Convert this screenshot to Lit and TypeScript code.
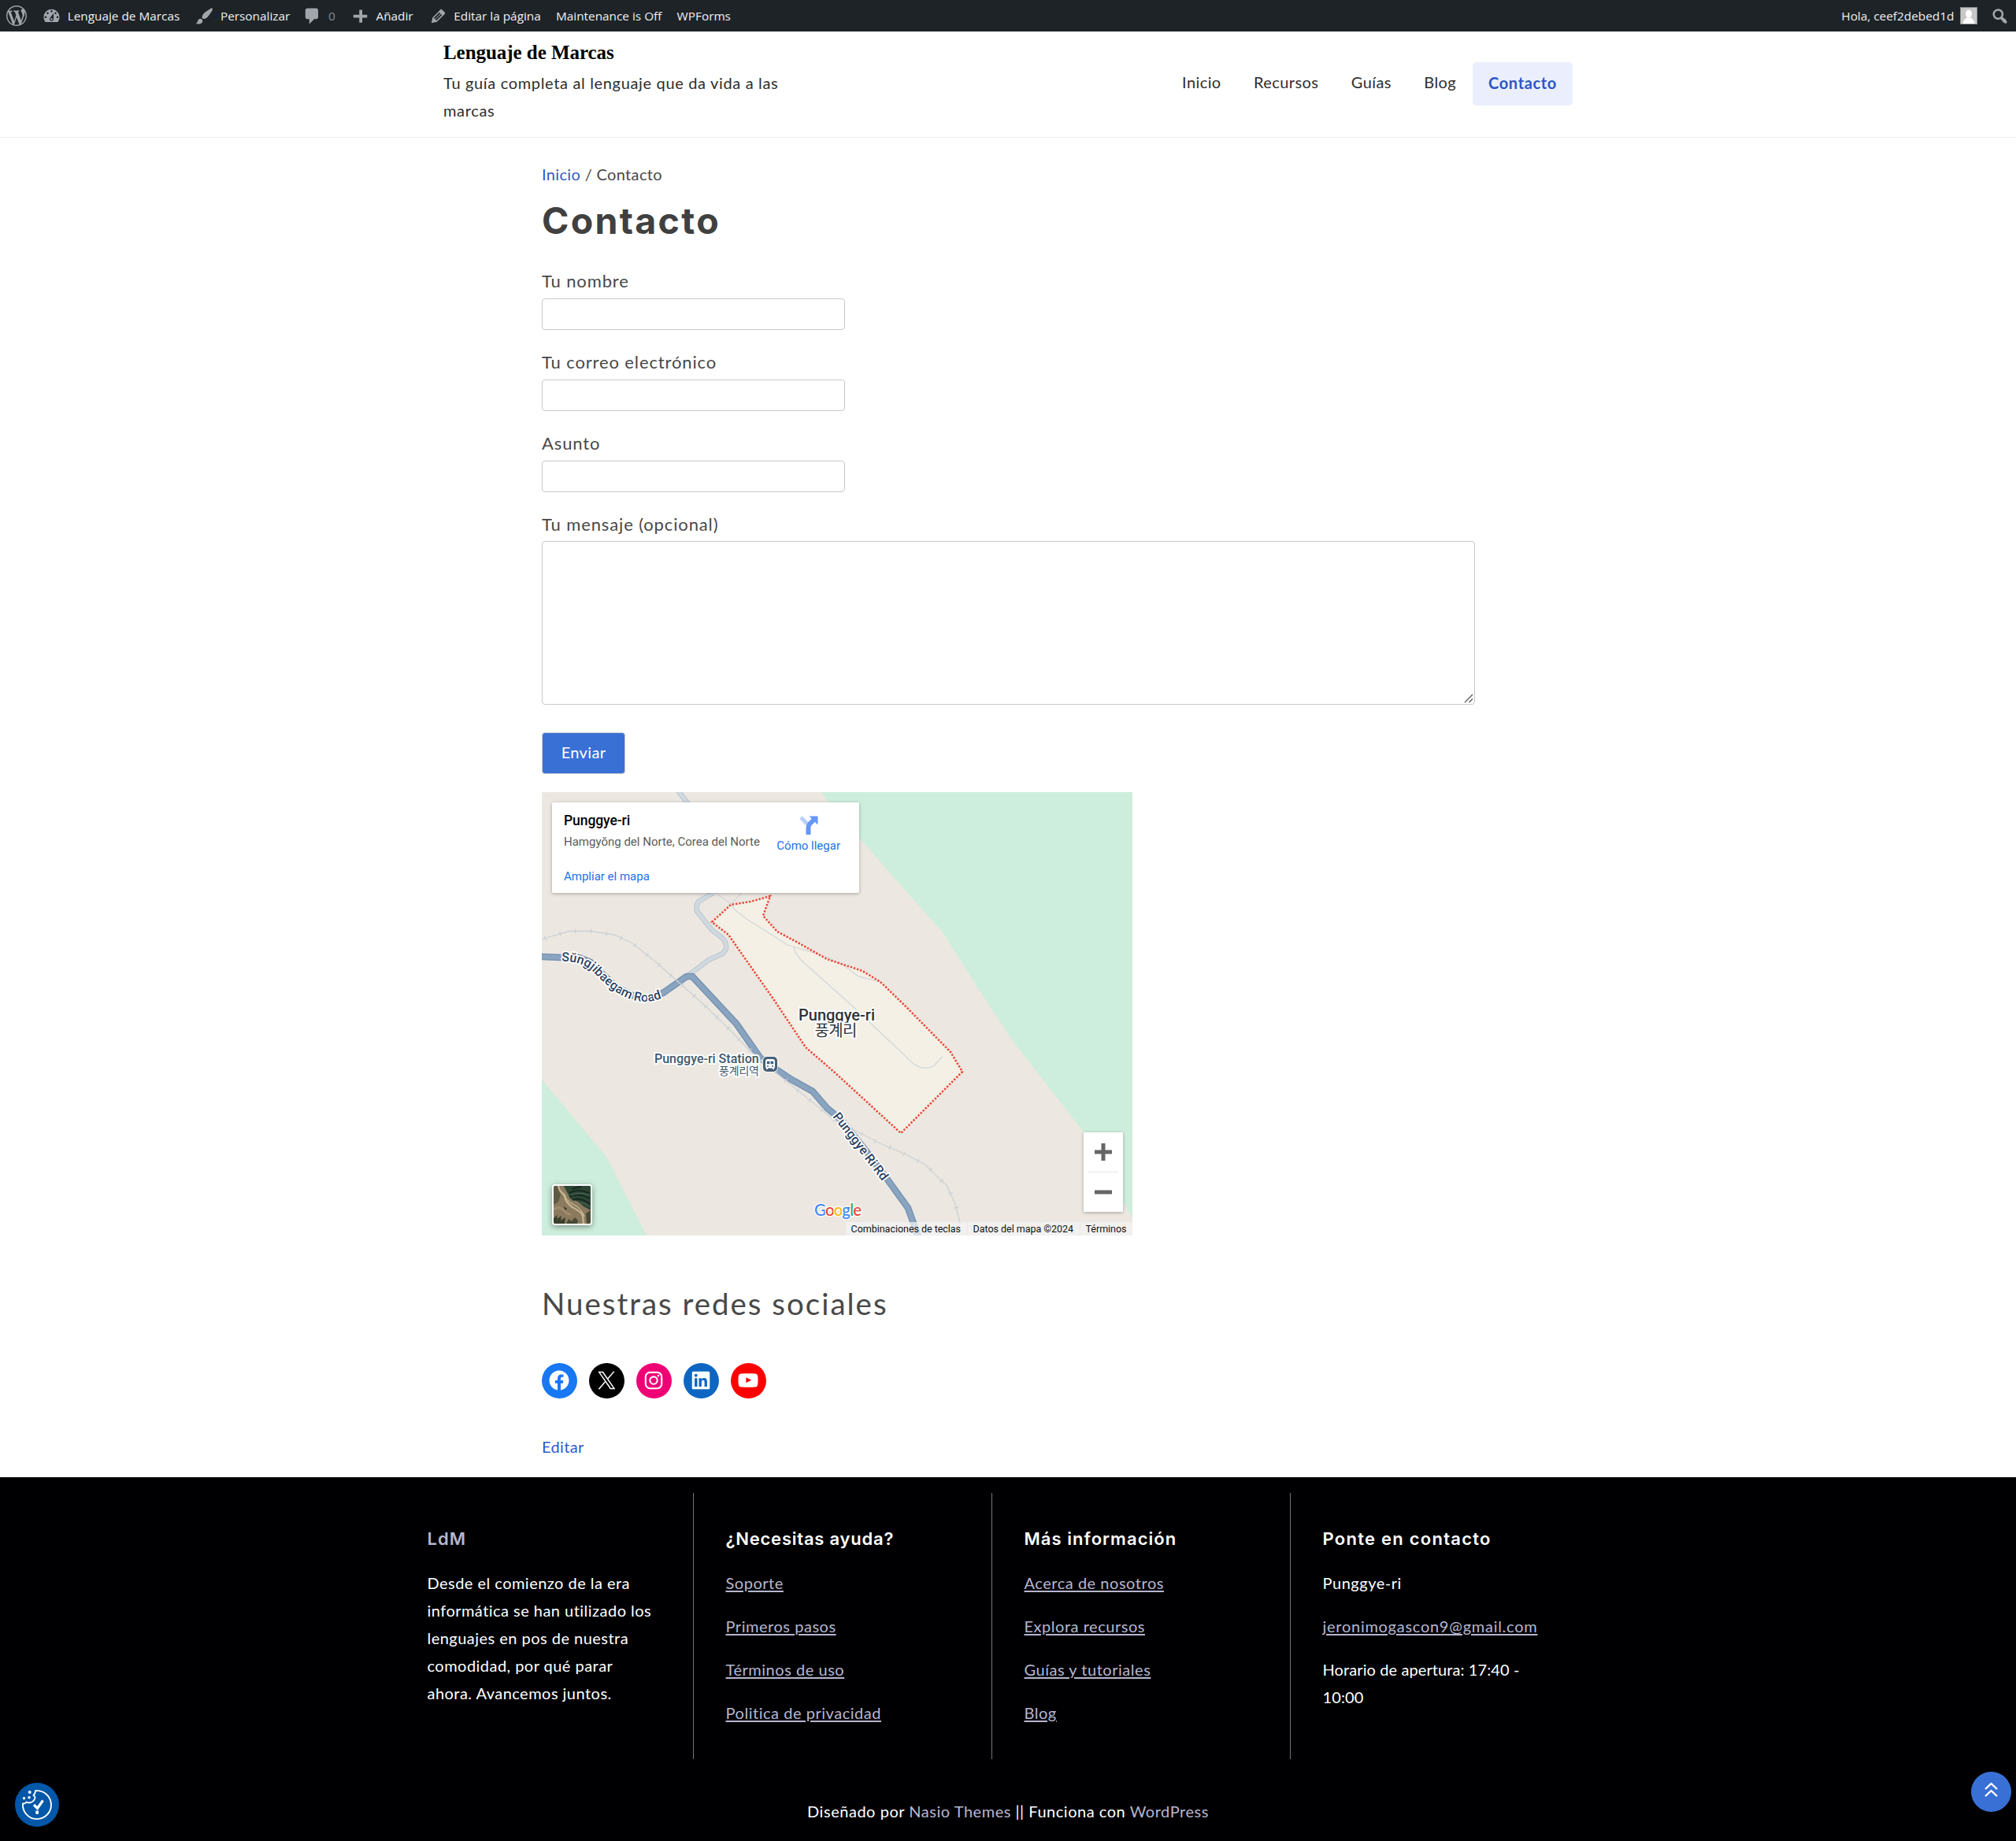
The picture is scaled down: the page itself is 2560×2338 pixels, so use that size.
import { LitElement, html, svg, css } from "lit";
import { customElement } from "lit/decorators.js";

const DASH = {
  wordpress:
    "M20 10c0-5.51-4.49-10-10-10C4.48 0 0 4.49 0 10c0 5.52 4.48 10 10 10 5.51 0 10-4.48 10-10zM7.78 15.37L4.37 6.22c.55-.02 1.17-.08 1.17-.08.5-.06.44-1.13-.06-1.11 0 0-1.45.11-2.37.11-.18 0-.37 0-.58-.01C4.12 2.69 6.87 1.11 10 1.11c2.33 0 4.45.87 6.05 2.34-.68-.11-1.65.39-1.65 1.58 0 .74.45 1.36.9 2.1.35.61.55 1.36.55 2.46 0 1.49-1.4 5-1.4 5l-3.03-8.37c.54-.02.82-.17.82-.17.5-.05.44-1.25-.06-1.22 0 0-1.44.12-2.38.12-.87 0-2.33-.12-2.33-.12-.5-.03-.56 1.2-.06 1.22l.92.08 1.26 3.41zM17.41 10c.24-.64.74-1.87.43-4.25.7 1.29 1.05 2.71 1.05 4.25 0 3.29-1.73 6.24-4.4 7.78.97-2.59 1.94-5.2 2.92-7.78zM6.1 18.09C3.12 16.65 1.11 13.53 1.11 10c0-1.3.23-2.48.72-3.59C3.25 10.3 4.67 14.2 6.1 18.09zm4.03-6.63l2.58 6.98c-.86.29-1.76.45-2.71.45-.79 0-1.57-.11-2.29-.33.81-2.38 1.62-4.74 2.42-7.1z",
  dashboard:
    "M3.76 16h12.48c1.1-1.37 1.76-3.11 1.76-5 0-4.42-3.58-8-8-8s-8 3.58-8 8c0 1.89.66 3.63 1.76 5zM10 4c.55 0 1 .45 1 1s-.45 1-1 1-1-.45-1-1 .45-1 1-1zM6 6c.55 0 1 .45 1 1s-.45 1-1 1-1-.45-1-1 .45-1 1-1zm8 0c.55 0 1 .45 1 1s-.45 1-1 1-1-.45-1-1 .45-1 1-1zm-5.37 5.55L12 7v6c0 1.1-.9 2-2 2s-2-.9-2-2c0-.57.24-1.08.63-1.45zM4 10c.55 0 1 .45 1 1s-.45 1-1 1-1-.45-1-1 .45-1 1-1zm12 0c.55 0 1 .45 1 1s-.45 1-1 1-1-.45-1-1 .45-1 1-1zm-5 3c0-.55-.45-1-1-1s-1 .45-1 1 .45 1 1 1 1-.45 1-1z",
  brush:
    "M18.33 3.57s.27-.8-.31-1.36c-.53-.52-1.22-.24-1.22-.24-.61.3-5.76 3.47-7.67 5.57-.86.96-2.06 3.79-1.09 4.82.92.98 3.96-.17 4.79-1 2.06-2.06 5.21-7.17 5.5-7.79zM1.4 17.65c2.37-1.56 1.46-3.41 3.23-4.64.93-.65 2.22-.62 3.08.29.63.67.8 2.57-.16 3.46-1.57 1.45-4 1.55-6.15.89z",
  comment: "M5 2h9c1.1 0 2 .9 2 2v7c0 1.1-.9 2-2 2h-2l-5 5v-5H5c-1.1 0-2-.9-2-2V4c0-1.1.9-2 2-2z",
  plus: "M17 8.5v3h-5v5H9v-5H3v-3h6v-5h3v5h5z",
  edit: "M13.89 3.39l2.71 2.72c.46.46.42 1.24.03 1.64l-8.01 8.02-5.56 1.16 1.16-5.58s7.6-7.63 7.99-8.03c.39-.39 1.22-.39 1.68.07zm-2.73 2.79l-5.59 5.61 1.11 1.11 5.54-5.65zm-2.97 8.23l5.58-5.6-1.07-1.08-5.59 5.6z",
  search:
    "M12.14 4.18c1.87 1.87 2.11 4.75.72 6.89.12.1.22.21.36.31.2.16.47.36.81.59.34.24.56.39.66.47.42.31.73.57.94.78.32.32.6.65.84 1 .25.35.44.69.59 1.04.14.35.21.68.18 1-.02.32-.14.59-.36.81s-.49.34-.81.36c-.31.02-.65-.04-.99-.19-.35-.14-.7-.34-1.04-.59-.35-.24-.68-.52-1-.84-.21-.21-.47-.52-.77-.93-.1-.13-.25-.35-.47-.66-.22-.32-.4-.57-.56-.78-.16-.2-.29-.35-.44-.5-2.07 1.09-4.69.76-6.44-.98-2.14-2.15-2.14-5.64 0-7.78 2.15-2.15 5.63-2.15 7.78 0zm-1.41 6.36c1.36-1.37 1.36-3.58 0-4.95-1.37-1.37-3.59-1.37-4.95 0-1.37 1.37-1.37 3.58 0 4.95 1.36 1.37 3.58 1.37 4.95 0z",
};

const dash = (d: string) => html`<svg class="ico" viewBox="0 0 20 20"><path fill-rule="evenodd" d=${d}></path></svg>`;

@customElement("admin-bar")
export class AdminBar extends LitElement {
  static styles = css`
    :host { display: block; }
    .bar { display: flex; align-items: center; height: 40px; padding: 0 8px 0 8px; gap: 19.2px; box-sizing: border-box; background: #1d2327; color: #f0f0f1; font: 15.35px/43px "Open Sans", sans-serif; white-space: nowrap; }
    .item { display: flex; align-items: center; gap: 7.5px; height: 40px; }
    .ico { width: 25px; height: 25px; fill: #a0a6ab; display: block; }
    .logo .ico { width: 26px; height: 26px; }
    .custom { margin-right: -3px; }
    .muted { color: #858a8e; }
    .right { margin-left: auto; }
    .avatar { width: 20px; height: 20px; border: 1px solid #8c8f94; background: #c8c8c8; display: block; }
    .find .ico { width: 25px; height: 25px; }
    .find { margin-left: -3px; }
  `;
  render() {
    return html`<div class="bar">
      <span class="item logo">${dash(DASH.wordpress)}</span>
      <span class="item">${dash(DASH.dashboard)}<span>Lenguaje de Marcas</span></span>
      <span class="item custom">${dash(DASH.brush)}<span>Personalizar</span></span>
      <span class="item">${dash(DASH.comment)}<span class="muted">0</span></span>
      <span class="item">${dash(DASH.plus)}<span>Añadir</span></span>
      <span class="item">${dash(DASH.edit)}<span>Editar la página</span></span>
      <span class="item">Maintenance is Off</span>
      <span class="item">WPForms</span>
      <span class="item right"><span>Hola, ceef2debed1d</span>
        <svg class="avatar" viewBox="0 0 20 20"><ellipse cx="10" cy="7.6" rx="4" ry="5" fill="#fff"></ellipse><path d="M2.5 20c.5-4.500 3-6 5-7.500h5c2 1.500 4.500 3 5 7.500z" fill="#fff"></path></svg></span>
      <span class="item find">${dash(DASH.search)}</span>
    </div>`;
  }
}

@customElement("site-header")
export class SiteHeader extends LitElement {
  static styles = css`
    :host { display: block; }
    .head { height: 135px; box-sizing: border-box; border-bottom: 1px solid #efefef; background: #fff; }
    .inner { width: 1434px; margin: 0 auto; display: flex; justify-content: space-between; font: 20px/35px Lato, sans-serif; color: #2e2e2e; }
    .brand { width: 450px; padding-top: 8px; }
    .title { font: bold 25px/38px "Liberation Serif", serif; letter-spacing: -0.05px; color: #000; margin-bottom: 2px; }
    .tag { letter-spacing: 0.66px; }
    nav { display: flex; align-items: flex-start; padding-top: 39px; letter-spacing: 0.4px; }
    a { padding: 8px 21px 13px 20.5px; line-height: 34px; }
    .active { padding: 9px 20px 12px; background: #ebeefd; color: #2a56c6; font-weight: 700; border-radius: 5px; letter-spacing: 0.65px; }
  `;
  render() {
    return html`<div class="head"><div class="inner">
      <div class="brand"><div class="title">Lenguaje de Marcas</div><div class="tag">Tu guía completa al lenguaje que da vida a las marcas</div></div>
      <nav><a>Inicio</a><a>Recursos</a><a>Guías</a><a>Blog</a><a class="active">Contacto</a></nav>
    </div></div>`;
  }
}

const RAIL =
  "M688 1193L700 1189L723 1182.500H750L780 1187L803 1198L833 1222L867 1252L893 1275L922 1303L950 1332L970 1350L995 1370L1042 1408L1057 1421L1100 1443L1113 1450L1150 1466L1175 1479L1198 1502L1202 1505L1213 1529L1218 1549V1569";
const ROAD =
  "M688 1215L713 1216L735 1216L750 1222L762 1234L782 1253L803 1264L823 1268L842 1261L872 1240L879 1240L907 1270L935 1300L965 1343L978 1353L1005 1371L1032 1386L1050 1407L1068 1422L1100 1462L1127 1498L1153 1534L1166 1570";
const LANE =
  "M906 1134L888 1144Q883 1149 885 1157L903 1180L918 1192Q923 1198 922 1205L918 1211L900 1219L875 1238";
const ZONE =
  "M904 1171L928 1149L953 1145L978 1138L969 1163L987 1183L1013 1197L1050 1218L1095 1233L1118 1247L1150 1278L1207 1336L1222 1361L1144 1439L1060 1362L1023 1330L983 1270L925 1187Z";

@customElement("place-map")
export class PlaceMap extends LitElement {
  static styles = css`
    :host { display: block; letter-spacing: 0; }
    .map { position: relative; width: 750px; height: 563px; overflow: hidden; font-family: Roboto, sans-serif; }
    .canvas { display: block; width: 750px; height: 563px; }
    .label { font: 500 20px Roboto, sans-serif; fill: #2f3337; stroke: #fff; stroke-width: 4px; paint-order: stroke; stroke-linejoin: round; }
    .ko { font-family: "Noto Sans CJK KR", sans-serif; font-weight: 400; }
    .small { font-size: 16px; fill: #3f586c; }
    .small.ko { font-size: 14px; }
    .road { font-size: 16px; fill: #2a3f5f; stroke-width: 3.5px; }
    .google { font: 500 20.5px Lato, sans-serif; stroke: #fff; stroke-width: 3px; stroke-opacity: 0.8; paint-order: stroke; }
    .card { position: absolute; left: 13px; top: 13px; width: 390px; height: 115px; box-sizing: border-box; background: #fff; border-radius: 2px; box-shadow: 0 1px 4px rgba(0, 0, 0, 0.3); display: flex; padding: 0 24px 0 15px; justify-content: space-between; font-size: 15px; line-height: 20px; white-space: nowrap; }
    .info { padding-top: 11px; }
    .name { font-weight: 500; font-size: 17.5px; line-height: 24px; letter-spacing: -0.08px; color: #000; }
    .addr { color: #5b5b5b; margin-top: 5px; }
    .more { margin-top: 24px; }
    .link { color: #1a73e8; }
    .dir { padding-top: 17px; display: flex; flex-direction: column; align-items: center; gap: 4px; }
    .dir svg { width: 24px; height: 24px; }
    .thumb { position: absolute; left: 13px; top: 498px; width: 51px; height: 52px; box-sizing: border-box; border: 2px solid #fff; border-radius: 4px; box-shadow: 0 2px 7px rgba(0, 0, 0, 0.4); overflow: hidden; }
    .thumb svg { display: block; width: 47px; height: 48px; }
    .zoom { position: absolute; left: 688px; top: 432px; width: 50px; height: 101px; background: #fff; box-shadow: 0 1px 4px rgba(0, 0, 0, 0.3); }
    .attr { position: absolute; right: 0; bottom: 0; display: flex; height: 17px; font-size: 12.5px; line-height: 17px; color: #111; letter-spacing: -0.03px; }
    .attr span { padding: 0 7.5px 0 7px; background: rgba(245, 245, 245, 0.72); margin-left: 1px; }
  `;
  render() {
    return html`<div class="map">
      <svg class="canvas" viewBox="688 1006 750 563">
        <rect x="688" y="1006" width="750" height="563" fill="#ece7e0"></rect>
        <path d="M1042 1006L1092 1065L1140 1120L1197 1184L1240 1252L1287 1323L1377 1439L1438 1547V1006Z" fill="#cdeedc"></path>
        <path d="M688 1371L770 1469L821 1569H688Z" fill="#cdeedc"></path>
        <path d=${ZONE} fill="#f4f0e5"></path>
        <g fill="none" stroke="#d3d7da" stroke-width="1.300">
          <path d="M908 1133L928 1148L933 1155L945 1165L1000 1200L1047 1214L1070 1225L1090 1240L1118 1247M942 1134L928 1148"></path>
          <path d="M1008 1203L1010 1210L1018 1220L1085 1280L1160 1351Q1173 1360 1185 1354L1197 1342"></path>
        </g>
        <path d=${ZONE} fill="none" stroke="#ea4335" stroke-width="2.500" stroke-dasharray="2.300 2"></path>
        <g fill="none">
          <path d=${LANE} stroke="#b9c6d0" stroke-width="6.500"></path>
          <path d=${LANE} stroke="#d0d9df" stroke-width="4.500"></path>
          <path d="M861 1004L876 1024" stroke="#b9c6d0" stroke-width="6.500"></path>
          <path d="M861 1004L876 1024" stroke="#d0d9df" stroke-width="4.500"></path>
          <path d=${ROAD} stroke="#6f90b3" stroke-width="8.500" stroke-linejoin="round"></path>
          <path d=${ROAD} stroke="#8aa4bf" stroke-width="6" stroke-linejoin="round"></path>
          <path d=${RAIL} stroke="#cdd1d5" stroke-width="1.300"></path>
          <path d=${RAIL} stroke="#cdd1d5" stroke-width="6" stroke-dasharray="1.300 18.500" stroke-dashoffset="-4"></path>
          <path id="w" d="M713 1221Q737 1220 752 1233C768 1249 783 1264 804 1270Q826 1276 848 1264"></path>
          <path id="s" d="M1057 1418L1091 1462L1126 1508"></path>
        </g>
        <text class="label road"><textPath href="#w">Sŭngjibaegam Road</textPath></text>
        <text class="label road"><textPath href="#s">Punggye Ri Rd</textPath></text>
        <text class="label" x="1014" y="1296">Punggye-ri</text>
        <text class="label ko" x="1034.500" y="1316" textLength="54">풍계리</text>
        <text class="label small" x="831" y="1350">Punggye-ri Station</text>
        <text class="label small ko" x="913" y="1364.500" textLength="51">풍계리역</text>
        <g transform="translate(969 1342)">
          <rect x="-1" y="-1" width="20" height="21" rx="6" fill="#fff" opacity=".8"></rect>
          <rect width="18" height="19" rx="5" fill="#455f78"></rect>
          <path d="M6 3h6q3 0 3 3v7q0 1.500-1.500 1.500l1 1.500h-2l-1-1.500h-5l-1 1.500h-2l1-1.500Q3 14.500 3 13V6q0-3 3-3z" fill="#fff"></path>
          <path d="M4.800 5.800h3.600v3.400H4.800zM9.600 5.800h3.600v3.400H9.600z" fill="#455f78"></path>
          <circle cx="6" cy="12" r="1" fill="#455f78"></circle><circle cx="12" cy="12" r="1" fill="#455f78"></circle>
        </g>
        <text class="google" x="1034" y="1543.500" textLength="60"><tspan fill="#4285f4">G</tspan><tspan fill="#ea4335">o</tspan><tspan fill="#fbbc04">o</tspan><tspan fill="#4285f4">g</tspan><tspan fill="#34a853">l</tspan><tspan fill="#ea4335">e</tspan></text>
      </svg>
      <div class="card">
        <div class="info"><div class="name">Punggye-ri</div><div class="addr">Hamgyŏng del Norte, Corea del Norte</div><div class="link more">Ampliar el mapa</div></div>
        <div class="dir link"><svg viewBox="0 0 24 24" fill="none"><path d="M2 2L10 10.500" stroke="#b9cffb" stroke-width="5"></path><path d="M11.500 24V15Q11.500 12 13.500 10L18.500 5" stroke="#6596f8" stroke-width="6"></path><path d="M12.500 0.500H23.500V11.500Z" fill="#6596f8"></path></svg><span>Cómo llegar</span></div>
      </div>
      <div class="thumb"><svg viewBox="0 0 47 48">
        <rect width="47" height="48" fill="#8b7a5e"></rect>
        <path d="M13 0H47V31L38 26L31 20L22 17L18 10Z" fill="#2c4535"></path>
        <path d="M0 0H5L9 12L6 20L0 24Z" fill="#5c5a43"></path>
        <path d="M20 9Q30 3 45 9M20 14Q32 8 46 16M24 18Q34 14 46 23M23 4L35 1" stroke="#16291f" stroke-width="2" fill="none"></path>
        <path d="M22 12Q33 7 45 12M32 22Q38 20 46 27" stroke="#55705a" stroke-width="1" fill="none"></path>
        <path d="M0 41L5 37L4 42L10 38L9 44L15 40L14 48H0ZM13 26L17 29L14 32Z" fill="#39402b"></path>
        <path d="M16 48L19 42L23 45L27 40L31 44L30 48ZM41 35L47 31V48H42Z" fill="#474b35"></path>
        <path d="M0 30Q8 25 13 31T22 36" stroke="#a08d6d" stroke-width="3" fill="none"></path>
        <path d="M6 0Q7 6 11 9T15 17Q19 25 27 29T37 38L38 48" stroke="#c2b08d" stroke-width="2.500" fill="none"></path>
        <path d="M12 10Q17 20 26 24T39 39" stroke="#ddcfae" stroke-width="1" fill="none"></path>
      </svg></div>
      <svg class="zoom" viewBox="0 0 50 101"><path d="M14 22.500h8.500V14h5v8.500H36v5h-8.500V36h-5v-8.500H14zM14 73.500h22v5H14z" fill="#666"></path><path d="M6 50.500h38" stroke="#e6e6e6" stroke-width="1.200"></path></svg>
      <div class="attr"><span>Combinaciones de teclas</span><span>Datos del mapa ©2024</span><span>Términos</span></div>
    </div>`;
  }
}

const SOCIAL = [
  { bg: "fb", art: svg`<path d="M12 2C6.5 2 2 6.5 2 12c0 5 3.7 9.1 8.4 9.9v-7H7.900V12h2.500V9.800c0-2.500 1.500-3.900 3.800-3.900 1.100 0 2.200.2 2.200.2v2.500h-1.300c-1.200 0-1.600.8-1.600 1.600V12h2.800l-.4 2.900h-2.300v7C18.300 21.100 22 17 22 12c0-5.500-4.500-10-10-10z"></path>` },
  { bg: "tx", art: svg`<path d="M13.982 10.622 20.54 3h-1.554l-5.693 6.618L8.745 3H3.500l6.876 10.007L3.500 21h1.554l6.012-6.989L15.868 21h5.245l-7.131-10.378Zm-2.128 2.474-.697-.997-5.543-7.930H8l4.474 6.400.697.996 5.815 8.318h-2.387l-4.745-6.787Z"></path>` },
  { bg: "ig", art: svg`<rect x="3.850" y="3.850" width="16.300" height="16.300" rx="4.600" fill="none" stroke="#fff" stroke-width="1.700"></rect><circle cx="12" cy="12" r="3.750" fill="none" stroke="#fff" stroke-width="1.700"></circle><circle cx="16.800" cy="7.200" r="1.100"></circle>` },
  { bg: "li", art: svg`<path d="M19.7,3H4.3C3.582,3,3,3.582,3,4.3v15.4C3,20.418,3.582,21,4.3,21h15.4c0.718,0,1.3-0.582,1.3-1.3V4.3C21,3.582,20.418,3,19.7,3z M8.339,18.338H5.667v-8.59h2.672V18.338z M7.004,8.574c-0.857,0-1.549-0.694-1.549-1.548c0-0.855,0.691-1.548,1.549-1.548c0.854,0,1.547,0.694,1.547,1.548C8.551,7.881,7.858,8.574,7.004,8.574z M18.339,18.338h-2.669v-4.177c0-0.996-0.017-2.278-1.387-2.278c-1.389,0-1.601,1.086-1.601,2.206v4.249h-2.667v-8.59h2.559v1.174h0.037c0.356-0.675,1.227-1.387,2.526-1.387c2.703,0,3.203,1.779,3.203,4.092V18.338z"></path>` },
  { bg: "yt", art: svg`<path d="M21.8,8.001c0,0-0.195-1.378-0.795-1.985c-0.76-0.797-1.613-0.801-2.004-0.847c-2.799-0.202-6.997-0.202-6.997-0.202h-0.009c0,0-4.198,0-6.997,0.202C4.608,5.216,3.756,5.22,2.995,6.016C2.395,6.623,2.2,8.001,2.2,8.001S2,9.62,2,11.238v1.517c0,1.618,0.2,3.237,0.2,3.237s0.195,1.378,0.795,1.985c0.761,0.797,1.76,0.771,2.205,0.855c1.6,0.153,6.8,0.201,6.8,0.201s4.203-0.006,7.001-0.209c0.391-0.047,1.243-0.051,2.004-0.847c0.6-0.607,0.795-1.985,0.795-1.985s0.2-1.618,0.2-3.237v-1.517C22,9.62,21.8,8.001,21.8,8.001z M9.935,14.594l-0.001-5.62l5.404,2.82L9.935,14.594z"></path>` },
];

@customElement("contact-page")
export class ContactPage extends LitElement {
  static styles = css`
    :host { display: block; }
    main { width: 1184px; margin: 0 auto; padding: 29px 0 21px; font: 20px/35px Lato, sans-serif; letter-spacing: 0.35px; color: #484848; }
    .link { color: #305bc8; }
    h1 { font: 700 46.5px/56px Inter, sans-serif; letter-spacing: 2.3px; margin: 13px 0 31px; color: #404040; }
    .field { display: block; position: relative; margin-bottom: 23px; }
    .label { display: block; height: 40px; font-size: 22px; line-height: 36px; letter-spacing: 0.87px; }
    .field input, .field textarea { display: block; box-sizing: border-box; border: 1px solid #c8c8c8; border-radius: 4px; background: #fff; margin: 0; padding: 4px; }
    .field input { width: 385px; height: 40px; }
    .field textarea { width: 1185px; height: 208px; resize: none; }
    .grip { position: absolute; right: 1px; bottom: 2px; width: 12px; height: 12px; stroke: #555; stroke-width: 1.3; }
    .msg { margin-bottom: 35px; }
    .msg .label { height: 39px; }
    .send { display: block; width: 106px; height: 53px; box-sizing: border-box; border: 1px solid #ccc; border-radius: 4px; background: #3970d6; color: #fff; font: 20px/48px Lato, sans-serif; letter-spacing: 0.35px; padding: 0 0 3px; margin: 0 0 23px; }
    h2 { font: 400 38.5px/60px Lato, sans-serif; letter-spacing: 1.98px; margin: 56px 0 46px; color: #484848; }
    .social { display: flex; gap: 15px; margin-bottom: 44px; }
    .social span { width: 45px; height: 45px; box-sizing: border-box; padding: 7px 8px 8px 7px; border-radius: 50%; display: flex; }
    .social svg { width: 30px; height: 30px; fill: #fff; }
    .fb { background: #1877f2; }
    .tx { background: #000; }
    .ig { background: #f00075; }
    .li { background: #0d66c2; }
    .yt { background: #f00; }
  `;
  render() {
    return html`<main>
      <div><span class="link">Inicio</span> / Contacto</div>
      <h1>Contacto</h1>
      <label class="field"><span class="label">Tu nombre</span><input /></label>
      <label class="field"><span class="label">Tu correo electrónico</span><input /></label>
      <label class="field"><span class="label">Asunto</span><input /></label>
      <label class="field msg"><span class="label">Tu mensaje (opcional)</span><textarea></textarea><svg class="grip" viewBox="0 0 12 12"><path d="M1 11L11 1M6.500 11L11 6.500"></path></svg></label>
      <button class="send">Enviar</button>
      <place-map></place-map>
      <h2>Nuestras redes sociales</h2>
      <div class="social">${SOCIAL.map((s) => html`<span class=${s.bg}><svg viewBox="0 0 24 24">${s.art}</svg></span>`)}</div>
      <div class="link">Editar</div>
    </main>`;
  }
}

@customElement("site-footer")
export class SiteFooter extends LitElement {
  static styles = css`
    :host { display: block; }
    footer { height: 462px; box-sizing: border-box; padding-top: 20px; background: #000003; color: #fff; font: 20px/35px Lato, sans-serif; letter-spacing: 0.53px; }
    .cols { display: grid; grid-template-columns: repeat(4, 379px); width: 1516px; height: 338px; margin-left: 502px; }
    .col { box-sizing: border-box; padding: 43px 38px 0 40.5px; border-right: 1px solid #737377; }
    .col:last-child { border-right: 0; }
    h3 { font: 600 22px/30px Inter, sans-serif; letter-spacing: 1.05px; margin: 0 0 24px; white-space: nowrap; }
    .tight { letter-spacing: 0.78px; }
    .wide { letter-spacing: 1.25px; }
    .dim { color: #b6b6cf; }
    .line { display: block; margin-bottom: 20px; white-space: nowrap; }
    .a { color: #b6b6cf; text-decoration: underline; text-decoration-thickness: 1.5px; text-underline-offset: 2px; }
    .mail { letter-spacing: 0.73px; }
    .about, .hours { margin: 0; white-space: pre-line; }
    .about { letter-spacing: 0.47px; }
    .hours { letter-spacing: 0.1px; }
    .credit { text-align: center; padding-top: 49px; }
  `;
  render() {
    const link = (t: string) => html`<span class="line"><a class="a">${t}</a></span>`;
    return html`<footer>
      <div class="cols">
        <div class="col"><h3 class="dim">LdM</h3><p class="about">${"Desde el comienzo de la era\ninformática se han utilizado los\nlenguajes en pos de nuestra\ncomodidad, por qué parar\nahora. Avancemos juntos."}</p></div>
        <div class="col"><h3 class="tight">¿Necesitas ayuda?</h3>${["Soporte", "Primeros pasos", "Términos de uso", "Politica de privacidad"].map(link)}</div>
        <div class="col"><h3>Más información</h3>${["Acerca de nosotros", "Explora recursos", "Guías y tutoriales", "Blog"].map(link)}</div>
        <div class="col"><h3 class="wide">Ponte en contacto</h3><span class="line">Punggye-ri</span><span class="line"><a class="a mail">jeronimogascon9@gmail.com</a></span><p class="hours">${"Horario de apertura: 17:40 -\n10:00"}</p></div>
      </div>
      <div class="credit">Diseñado por <span class="dim">Nasio Themes</span> || Funciona con <span class="dim">WordPress</span></div>
    </footer>`;
  }
}

@customElement("app-root")
export class AppRoot extends LitElement {
  static styles = css`
    :host { display: block; position: relative; width: 2560px; height: 2338px; overflow: hidden; background: #fff; }
    .cookie { position: absolute; left: 19px; top: 2264px; width: 56px; height: 56px; }
    .up { position: absolute; left: 2503px; top: 2250px; width: 51px; height: 51px; }
  `;
  render() {
    return html`<admin-bar></admin-bar><site-header></site-header><contact-page></contact-page><site-footer></site-footer>
      <svg class="cookie" viewBox="0 0 56 56" fill="none" stroke="#fff">
        <circle cx="28" cy="28" r="28" fill="#0157a8" stroke="none"></circle>
        <path d="M26 10.200A18 18 0 1 1 10 26.500C12 26.500 13.500 27 14.500 24.500C19 27 25 24 25.500 18.500C25.500 17.500 25 17 23.500 16C25 14.500 26 12.500 26 10.200Z" stroke-width="1.900" stroke-linejoin="round"></path>
        <g fill="#fff" stroke="none"><circle cx="18.700" cy="12" r="2"></circle><circle cx="11.500" cy="19.800" r="1.700"></circle><circle cx="18" cy="18.700" r="1.700"></circle><path d="M26.300 35.500h3.700v4.300h-3.700z"></path></g>
        <path d="M24 28L28.500 32.500L35.500 22.500" stroke-width="3.200"></path>
      </svg>
      <svg class="up" viewBox="0 0 51 51" fill="none" stroke="#fff" stroke-width="2.400" stroke-linecap="round" stroke-linejoin="round">
        <circle cx="25.500" cy="25.500" r="25.500" fill="#3970d6" stroke="none"></circle>
        <path d="M18.700 21.500L25.500 15L32.300 21.500M18.700 30.500L25.500 24L32.300 30.500"></path>
      </svg>`;
  }
}
